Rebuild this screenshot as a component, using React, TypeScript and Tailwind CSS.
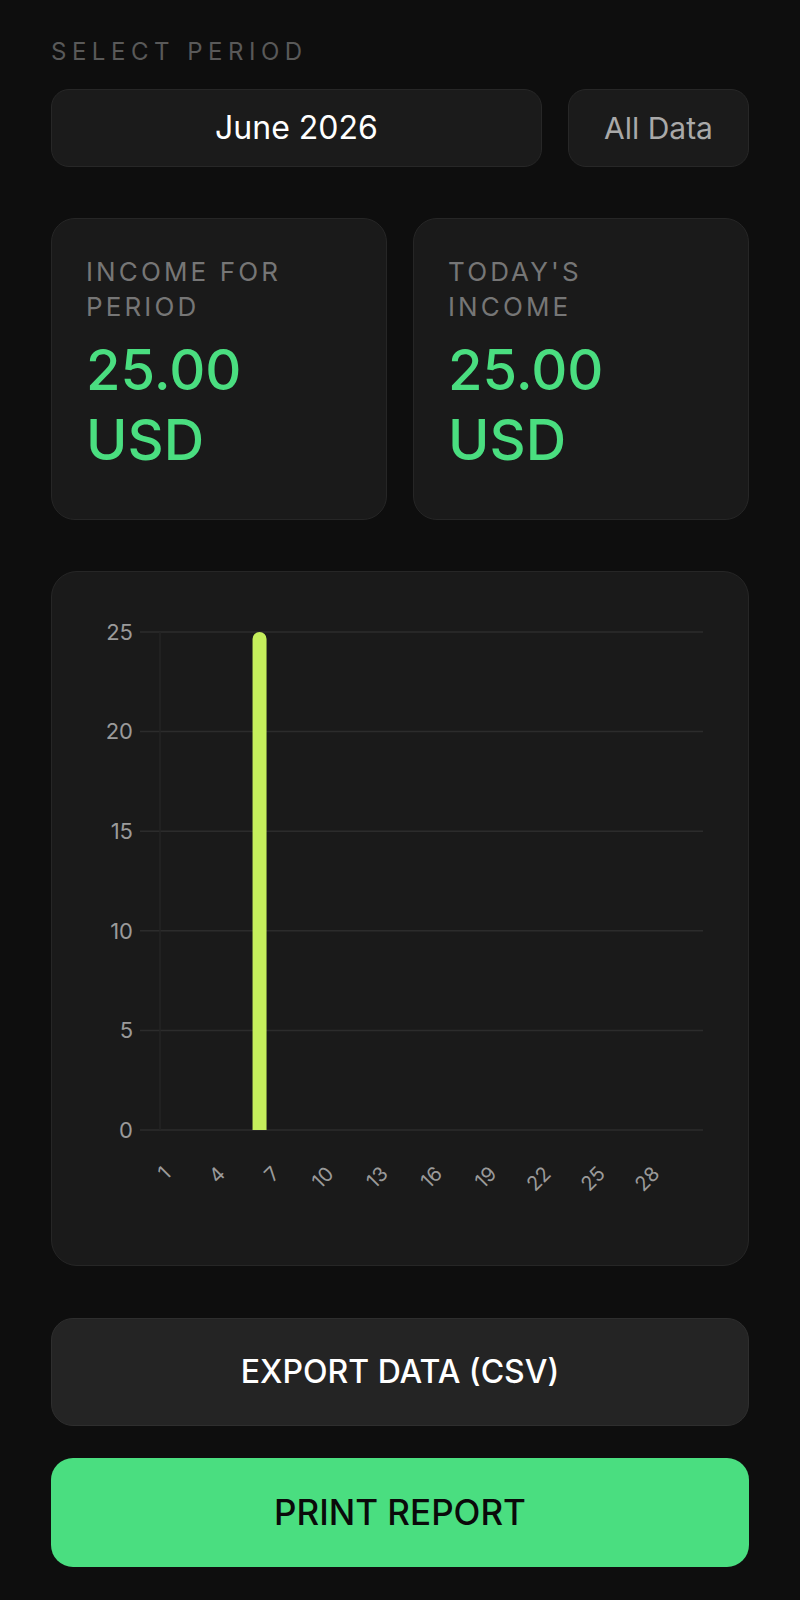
const font = { fontFamily: "Inter, 'Noto Sans', sans-serif" };

const plotL = 108;
const plotR = 651;
const top = 60;
const bottom = 558;
const dayW = (plotR - plotL) / 30;
const yTicks = [25, 20, 15, 10, 5, 0];
const xTicks = [1, 4, 7, 10, 13, 16, 19, 22, 25, 28];
const data = [{ day: 6, value: 25 }];

const yFor = (v: number) => bottom - (v / 25) * (bottom - top);
const xFor = (d: number) => plotL + (d - 0.5) * dayW;

function Chart() {
  return (
    <svg width="696" height="693" viewBox="0 0 696 693" className="block">
      {yTicks.map((t) => (
        <g key={t}>
          <line x1={88} x2={plotR} y1={yFor(t)} y2={yFor(t)} stroke="#2c2c2c" strokeWidth={1.5} />
          <text
            x={81}
            y={yFor(t)}
            dy="0.35em"
            textAnchor="end"
            fill="#9a9a9a"
            fontSize={22}
            fontFamily="Inter, sans-serif"
          >
            {t}
          </text>
        </g>
      ))}
      <line x1={plotL} x2={plotL} y1={top} y2={bottom} stroke="#242424" strokeWidth={1.5} />
      {data.map((d) => {
        const cx = xFor(d.day);
        const y = yFor(d.value);
        const r = 7;
        return (
          <path
            key={d.day}
            d={`M${cx - r} ${bottom} V${y + r} A${r} ${r} 0 0 1 ${cx + r} ${y + r} V${bottom} Z`}
            fill="#c5ef5c"
          />
        );
      })}
      {xTicks.map((d) => {
        const ax = xFor(d) + 3;
        const ay = 603;
        return (
          <text
            key={d}
            x={ax}
            y={ay}
            textAnchor="end"
            transform={`rotate(-45 ${ax} ${ay})`}
            fill="#9a9a9a"
            fontSize={20}
            fontFamily="Inter, sans-serif"
          >
            {d}
          </text>
        );
      })}
    </svg>
  );
}

function StatCard({ label, value }: { label: string[]; value: string }) {
  return (
    <div className="rounded-[24px] border border-[#262626] bg-[#1a1a1a] pl-[34px] pr-4 pt-[35px] pb-[44px]">
      <div className="text-[26px] leading-[35px] tracking-[0.12em] text-[#767676]">
        {label[0]}
        <br />
        {label[1]}
      </div>
      <div className="mt-[11px] text-[56px] leading-[70px] font-medium text-[#4ade80]">
        {value}
        <br />
        USD
      </div>
    </div>
  );
}

export default function App() {
  return (
    <div className="min-h-[1600px] bg-[#0e0e0e] px-[51px] pt-[36px]" style={font}>
      <div className="text-[24px] leading-[32px] tracking-[0.23em] text-[#595959]">SELECT PERIOD</div>

      <div className="mt-[21px] flex gap-[26px]">
        <button className="flex h-[78px] flex-1 items-center justify-center rounded-[18px] border border-[#272727] bg-[#1b1b1b] text-[32px] text-white">
          June 2026
        </button>
        <button className="flex h-[78px] w-[181px] items-center justify-center rounded-[18px] border border-[#272727] bg-[#1b1b1b] text-[30px] text-[#a9a9a9]">
          All Data
        </button>
      </div>

      <div className="mt-[51px] grid grid-cols-2 gap-[26px]">
        <StatCard label={["INCOME FOR", "PERIOD"]} value="25.00" />
        <StatCard label={["TODAY'S", "INCOME"]} value="25.00" />
      </div>

      <div className="mt-[51px] h-[695px] rounded-[26px] border border-[#262626] bg-[#1a1a1a]">
        <Chart />
      </div>

      <button className="mt-[52px] flex h-[108px] w-full items-center justify-center rounded-[22px] border border-[#2e2e2e] bg-[#242424] text-[32px] font-medium text-white">
        EXPORT DATA (CSV)
      </button>

      <button className="mt-[32px] flex h-[109px] w-full items-center justify-center rounded-[22px] bg-[#4ade80] text-[35px] font-medium text-[#0a0a0a]">
        PRINT REPORT
      </button>
    </div>
  );
}
